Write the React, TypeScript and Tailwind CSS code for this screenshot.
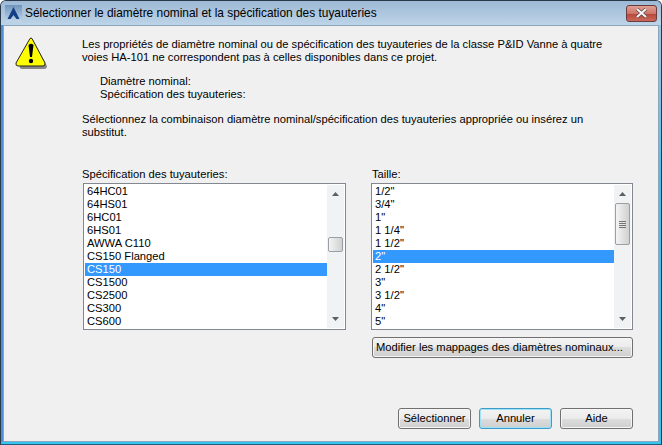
const specs = ["64HC01", "64HS01", "6HC01", "6HS01", "AWWA C110", "CS150 Flanged", "CS150", "CS1500", "CS2500", "CS300", "CS600"];
const sizes = ['1/2"', '3/4"', '1"', '1 1/4"', '1 1/2"', '2"', '2 1/2"', '3"', '3 1/2"', '4"', '5"'];

function Arrow({ up }: { up: boolean }) {
    return (
        <svg width="7" height="4" viewBox="0 0 7 4" className="block">
            <path d={up ? "M3.5 0 L7 4 L0 4 Z" : "M0 0 L7 0 L3.5 4 Z"} fill="#5a5f66" />
        </svg>
    );
}

function ListBox({
    items,
    selected,
    thumbTop,
    thumbHeight,
    grip,
}: {
    items: string[];
    selected: string;
    thumbTop: number;
    thumbHeight: number;
    grip?: boolean;
}) {
    return (
        <div className="flex h-[147px] border border-[#828790] bg-white">
            <ul className="flex-1 pt-[1px] pl-[1px]">
                {items.map((item) => (
                    <li
                        key={item}
                        className={
                            item === selected
                                ? "h-[13px] pl-[2px] leading-[13px] bg-[#3399ff] text-white"
                                : "h-[13px] pl-[2px] leading-[13px]"
                        }
                    >
                        {item}
                    </li>
                ))}
            </ul>
            <div className="relative w-[17px] m-[1px] ml-0 flex flex-col items-center justify-between bg-[#f1f2f3] py-[7px]">
                <Arrow up />
                <div
                    className="absolute left-[1px] w-[15px] flex flex-col items-center justify-center gap-[1px] rounded-[2px] border border-[#9a9fa5] bg-gradient-to-r from-[#f4f4f4] to-[#d0d0d0]"
                    style={{ top: thumbTop, height: thumbHeight }}
                >
                    {grip && (
                        <>
                            <div className="w-[7px] h-[1px] bg-[#777]" />
                            <div className="w-[7px] h-[1px] bg-[#777]" />
                            <div className="w-[7px] h-[1px] bg-[#777]" />
                            <div className="w-[7px] h-[1px] bg-[#777]" />
                        </>
                    )}
                </div>
                <Arrow up={false} />
            </div>
        </div>
    );
}

function Btn({ label, focus, className }: { label: string; focus?: boolean; className?: string }) {
    return (
        <button
            type="button"
            className={`h-[21px] rounded-[3px] border whitespace-nowrap bg-[linear-gradient(#f3f3f3_0%,#ebebeb_50%,#dddddd_50%,#cfcfcf_100%)] ${
                focus ? "border-[#3c9dc9] shadow-[inset_0_0_0_1px_#9fe2f5]" : "border-[#707070] shadow-[inset_0_0_0_1px_#f6f6f6]"
            } ${className ?? "text-center"}`}
        >
            {label}
        </button>
    );
}

export default function App() {
    return (
        <div className="w-[662px] h-[445px] flex flex-col rounded-t-[6px] border border-[#2b3a4a] border-b-[#1f5f7c] bg-gradient-to-b from-[#a9c4dc] via-[#45c0ea] via-40% to-[#35c4f0] font-['Liberation_Sans',sans-serif] text-[11.2px] leading-[13px] text-black overflow-hidden">
            {/* Title bar */}
            <div className="h-[24px] flex items-center pl-[4px] pr-[4px] bg-gradient-to-b from-[#9db9d5] to-[#bdd4e8]">
                <svg width="17" height="17" viewBox="0 0 17 17" className="shrink-0 bg-gradient-to-b from-[#6f95bd] to-[#c4d6e8]">
                    <path d="M8.5 2 L14.5 14 L11.5 14 L8.5 10 L5.5 14 L2.5 14 Z" fill="#123f85" />
                </svg>
                <span className="ml-[3px] flex-1 text-[11.9px]">Sélectionner le diamètre nominal et la spécification des tuyauteries</span>
                <div className="w-[31px] h-[17px] flex items-center justify-center rounded-[3px] border border-[#6b3a3a] bg-[linear-gradient(#e0a095_0%,#cf7468_50%,#b7483a_55%,#c9695c_100%)]">
                    <svg width="13" height="10" viewBox="0 0 13 10">
                        <path d="M2 1 L11 9 M11 1 L2 9" stroke="#5a3a3a" strokeWidth="3.4" />
                        <path d="M2 1 L11 9 M11 1 L2 9" stroke="#f4f4f4" strokeWidth="2.2" />
                    </svg>
                </div>
            </div>

            {/* Client area */}
            <div className="flex-1 mx-[2px] mb-[2px] flex flex-col bg-[#f0f0f0] border border-[#8ba5bd] shadow-[-2px_0_0_#4f8fd6] pt-[12px] pl-[11px] pr-[25px]">
                <div className="flex">
                    <svg width="34" height="34" viewBox="0 0 34 34" className="shrink-0 mt-[-1px]">
                        <path d="M17 2 L32 29 Q32 32 29 32 L7 32 Q4 32 5 29 Z" fill="#888" />
                        <path d="M15 1.5 Q16 0.5 17 1.5 L30 26 Q30.5 29 28 29 L3 29 Q0.5 29 1 26 Z" fill="#fdfd00" stroke="#222" strokeWidth="1" />
                        <path d="M13.5 8 Q16 5.5 18.5 8 L17 20 L15 20 Z" fill="#000" />
                        <circle cx="16" cy="24" r="2.2" fill="#000" />
                    </svg>
                    <div className="ml-[33px]">
                        <p>
                            Les propriétés de diamètre nominal ou de spécification des tuyauteries de la classe P&amp;ID Vanne à quatre
                            <br />
                            voies HA-101 ne correspondent pas à celles disponibles dans ce projet.
                        </p>
                        <p className="mt-[11px] ml-[18px]">
                            Diamètre nominal:
                            <br />
                            Spécification des tuyauteries:
                        </p>
                        <p className="mt-[12px]">
                            Sélectionnez la combinaison diamètre nominal/spécification des tuyauteries appropriée ou insérez un
                            <br />
                            substitut.
                        </p>
                    </div>
                </div>

                <div className="mt-[29px] ml-[68px] flex gap-[25px]">
                    <div className="w-[263px]">
                        <div className="mb-[2px] -ml-[1px]">Spécification des tuyauteries:</div>
                        <ListBox items={specs} selected="CS150" thumbTop={52} thumbHeight={15} />
                    </div>
                    <div className="w-[262px]">
                        <div className="mb-[2px] ml-[1px]">Taille:</div>
                        <ListBox items={sizes} selected={'2"'} thumbTop={18} thumbHeight={42} grip />
                        <Btn label="Modifier les mappages des diamètres nominaux..." className="mt-[7px] ml-[1px] w-[261px] text-left pl-[3px]" />
                    </div>
                </div>

                <div className="mt-[50px] flex justify-end gap-[8px]">
                    <Btn label="Sélectionner" className="w-[73px] text-center" />
                    <Btn label="Annuler" focus className="w-[73px] text-center" />
                    <Btn label="Aide" className="w-[73px] text-center" />
                </div>
            </div>
        </div>
    );
}
